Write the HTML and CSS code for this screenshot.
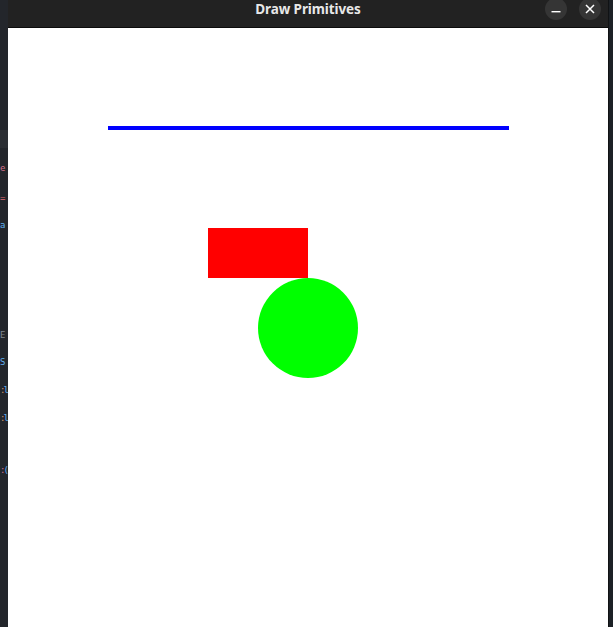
FILE: index.html
```html
<!DOCTYPE html>
<html>
<head>
<meta charset="utf-8">
<link rel="stylesheet" href="styles.css">
<title>Draw Primitives</title>
</head>
<body>
<div class="desk">
  <div class="behind">
    <div class="band"></div>
    <div class="frag f1"><span class="pink">e</span></div>
    <div class="frag f2"><span class="red">=</span></div>
    <div class="frag f3"><span class="blue">a</span></div>
    <div class="frag f4"><span class="gray">E</span></div>
    <div class="frag f5"><span class="blue">S</span></div>
    <div class="frag f6"><span class="orange">:</span><span class="blue">l</span></div>
    <div class="frag f7"><span class="orange">:</span><span class="blue">l</span></div>
    <div class="frag f8"><span class="pink">:</span><span class="blue">(</span></div>
  </div>
  <div class="window">
    <div class="titlebar">
      <div class="title">Draw Primitives</div>
      <div class="controls">
        <div class="btn"><svg width="10" height="10" viewBox="0 0 10 10"><rect x="0.5" y="7" width="9" height="1.4" fill="#fff"/></svg></div>
        <div class="btn"><svg width="10" height="10" viewBox="0 0 10 10"><path d="M1 1 L9 9 M9 1 L1 9" stroke="#fff" stroke-width="1.5"/></svg></div>
      </div>
    </div>
    <div class="canvas">
      <div class="line"></div>
      <div class="rect"></div>
      <div class="circle"></div>
    </div>
  </div>
  <div class="edge"></div>
</div>
</body>
</html>
```
FILE: styles.css
```css
html, body {
  margin: 0;
  padding: 0;
  width: 613px;
  height: 627px;
  overflow: hidden;
  background: #1f2227;
}
.desk {
  display: flex;
  width: 613px;
  height: 627px;
}
.behind {
  width: 8px;
  flex: none;
  background: #23262b;
  display: flex;
  flex-direction: column;
  overflow: hidden;
  font-family: "DejaVu Sans Mono", monospace;
  font-size: 9px;
  line-height: 14px;
}
.band {
  margin-top: 130px;
  height: 18px;
  background: #2b2e33;
}
.frag {
  white-space: nowrap;
  height: 14px;
  letter-spacing: -2px;
}
.f1 { margin-top: 13px; }
.f2 { margin-top: 16px; }
.f3 { margin-top: 13px; }
.f4 { margin-top: 96px; }
.f5 { margin-top: 13px; }
.f6 { margin-top: 14px; }
.f7 { margin-top: 14px; }
.f8 { margin-top: 38px; }
.pink { color: #d5708a; }
.red { color: #e06c75; }
.orange { color: #d19a66; }
.blue { color: #61afef; }
.gray { color: #7f848e; }
.window {
  width: 600px;
  flex: none;
  display: flex;
  flex-direction: column;
  background: #fff;
}
.titlebar {
  height: 27px;
  flex: none;
  background: #222222;
  border-bottom: 1px solid #0c0c0c;
  display: flex;
  align-items: flex-start;
  justify-content: center;
  position: relative;
}
.title {
  font-family: "Noto Sans", "DejaVu Sans", sans-serif;
  font-weight: bold;
  font-size: 13.5px;
  color: #e8e8e8;
  line-height: 18px;
  letter-spacing: -0.1px;
}
.controls {
  position: absolute;
  right: 7px;
  top: -2px;
  display: flex;
  gap: 12px;
}
.btn {
  width: 22px;
  height: 22px;
  border-radius: 50%;
  background: #353535;
  display: flex;
  align-items: center;
  justify-content: center;
}
.canvas {
  flex: 1;
  background: #fff;
  display: flex;
  flex-direction: column;
  padding-left: 100px;
}
.line {
  margin-top: 98px;
  width: 401px;
  height: 4px;
  background: #0000ff;
}
.rect {
  margin-top: 98px;
  margin-left: 100px;
  width: 100px;
  height: 50px;
  background: #ff0000;
}
.circle {
  margin-left: 150px;
  width: 100px;
  height: 100px;
  border-radius: 50%;
  background: #00ff00;
}
.edge {
  flex: 1;
  background: #1c2126;
  border-left: 1px solid #101214;
}
```
